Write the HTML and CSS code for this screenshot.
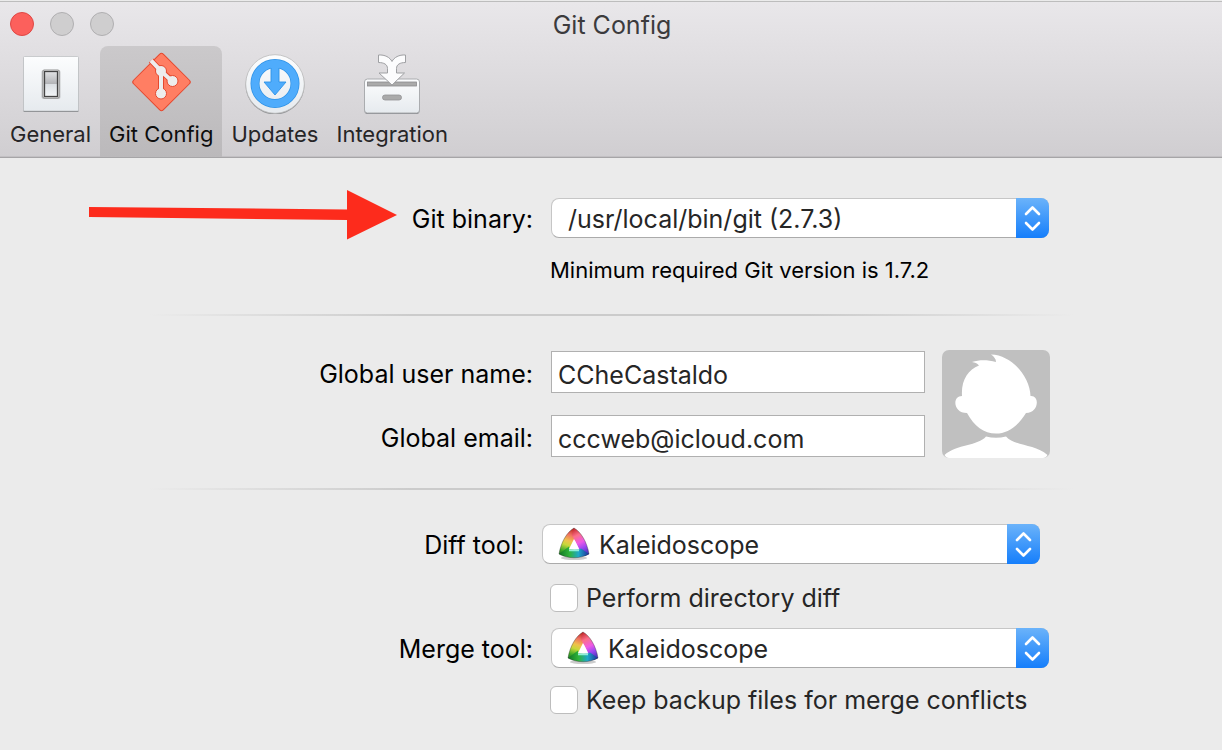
FILE: index.html
```html
<!DOCTYPE html>
<html lang="en">
<head>
<meta charset="utf-8">
<title>Git Config</title>
<link rel="stylesheet" href="styles.css">
</head>
<body>
<svg class="defs" width="0" height="0" aria-hidden="true">
  <defs>
    <linearGradient id="plate" x1="0" y1="0" x2="0" y2="1"><stop offset="0" stop-color="#fcfdfe"/><stop offset="1" stop-color="#e6eaee"/></linearGradient>
    <linearGradient id="lever" x1="0" y1="0" x2="0" y2="1"><stop offset="0" stop-color="#e2e3e5"/><stop offset=".48" stop-color="#b4b5b8"/><stop offset=".52" stop-color="#dce0e4"/><stop offset="1" stop-color="#f3f6f8"/></linearGradient>
    <linearGradient id="k-left" gradientUnits="userSpaceOnUse" x1="16" y1="1" x2="6" y2="30"><stop offset="0" stop-color="#b01a1a"/><stop offset=".25" stop-color="#f07060"/><stop offset=".45" stop-color="#f0c04c"/><stop offset=".6" stop-color="#c8d83a"/><stop offset=".8" stop-color="#42ac28"/><stop offset="1" stop-color="#126a22"/></linearGradient>
    <linearGradient id="k-right" gradientUnits="userSpaceOnUse" x1="14" y1="2" x2="28" y2="30"><stop offset="0" stop-color="#c02226"/><stop offset=".25" stop-color="#fb7088"/><stop offset=".5" stop-color="#ee5ae6"/><stop offset=".7" stop-color="#9a46f2"/><stop offset="1" stop-color="#23309e"/></linearGradient>
    <linearGradient id="k-bottom" x1="0" y1="0" x2="1" y2="0"><stop offset="0" stop-color="#117525"/><stop offset=".35" stop-color="#2fb43a"/><stop offset=".65" stop-color="#1fa8c8"/><stop offset="1" stop-color="#1d2f9c"/></linearGradient>
    <symbol id="kaleidoscope" viewBox="0 0 32 34">
      <ellipse cx="16" cy="31" rx="13" ry="2" fill="#000" opacity=".2"/>
      <path d="M16 1C9 5 3 15 1 27L8 29L11 22L16 12V1Z" fill="url(#k-left)"/>
      <path d="M16 1C23 5 29 15 31 27L27 29L21 22L16 12L14 8Z" fill="url(#k-right)"/>
      <path d="M1 27L11 19.500V22.500H21L23 21.500L31 27C22 32 10 32 1 27Z" fill="url(#k-bottom)"/>
      <path d="M16 1C9 5 3 15 1 27C10 32 22 32 31 27C29 15 23 5 16 1Z" fill="none" stroke="#222" stroke-opacity=".35"/>
      <path d="M11 23.500H21" fill="none" stroke="#8ff0d8" stroke-width="1.500"/>
      <path d="M16.500 13.500L12.500 21.500Q16.500 22.500 20.500 21.500Z" fill="#fff" stroke="#fff" stroke-width=".6"/>
    </symbol>
    <symbol id="stepper" viewBox="0 0 33 40">
      <path d="M10 16L16.500 9.500L23 16M10 25L16.500 31.500L23 25" fill="none" stroke="#fff" stroke-width="2.600" stroke-linecap="round" stroke-linejoin="round"/>
    </symbol>
  </defs>
</svg>

<header class="chrome">
  <div class="titlebar">
    <div class="lights">
      <button class="light light-close" aria-label="Close"></button>
      <button class="light" aria-label="Minimize" disabled></button>
      <button class="light" aria-label="Zoom" disabled></button>
    </div>
    <h1 class="title">Git Config</h1>
  </div>
  <nav class="toolbar">
    <button class="tool">
      <svg class="tool-icon" viewBox="0 0 64 64">
        <rect x="4.500" y="7" width="55" height="55" rx="1" fill="#77797c"/>
        <rect x="4.500" y="6.500" width="55" height="54.500" rx="1" fill="url(#plate)" stroke="#bfc1c4" stroke-width=".8"/>
        <rect x="22.500" y="20" width="19" height="29" rx="2" fill="#777" opacity=".35"/>
        <rect x="24" y="20" width="16" height="28" rx="1" fill="#fff" stroke="#777" stroke-width=".8"/>
        <rect x="25.500" y="21.500" width="13" height="25" fill="url(#lever)" stroke="#444" stroke-width="1.300"/>
      </svg>
      <span>General</span>
    </button>
    <button class="tool tool-active" aria-current="page">
      <svg class="tool-icon" viewBox="0 0 64 64">
        <rect x="11.500" y="11" width="42" height="42" rx="2.500" transform="rotate(45 32.500 32)" fill="#ff7e63" stroke="#e5482e"/>
        <path d="M22 10.500L32 21L44 31.500M32 21V44" fill="none" stroke="#e5482e" stroke-width="6"/>
        <g fill="#ededed" stroke="#e5482e"><circle cx="32" cy="21" r="5.500"/><circle cx="43.500" cy="31" r="5.500"/><circle cx="32" cy="43.500" r="5.500"/></g>
        <path d="M22 10.500L32 21L43.500 31.500M32 21V44" fill="none" stroke="#ededed" stroke-width="4"/>
      </svg>
      <span>Git Config</span>
    </button>
    <button class="tool">
      <svg class="tool-icon" viewBox="0 0 64 64">
        <circle cx="32" cy="35" r="29.500" fill="#929497"/>
        <circle cx="32" cy="34" r="29.300" fill="url(#plate)" stroke="#bbb" stroke-width=".8"/>
        <circle cx="32" cy="33.500" r="20" fill="none" stroke="#2e92e6" stroke-width="9"/>
        <circle cx="32" cy="33.500" r="20" fill="none" stroke="#4facfc" stroke-width="7.500"/>
        <path d="M28 16H36V32H43L32 45L21 32H28Z" fill="#4facfc"/>
        <path d="M28 18V32H21L32 45L43 32H36V18" fill="none" stroke="#2e92e6" stroke-width=".9" stroke-linejoin="round"/>
      </svg>
      <span>Updates</span>
    </button>
    <button class="tool">
      <svg class="tool-icon" viewBox="0 0 64 64">
        <rect x="4.500" y="30" width="55" height="34" rx="3" fill="#85878a"/>
        <rect x="4.500" y="29" width="55" height="34" rx="3" fill="url(#plate)" stroke="#aaacaf"/>
        <rect x="7.500" y="32" width="49" height="4" fill="#aaa" stroke="#8b8b8d" stroke-width=".8"/>
        <rect x="22.500" y="45" width="19" height="5" rx="2.500" fill="#aaa" stroke="#929294" stroke-width=".8"/>
        <path d="M18.500 5C25 4.500 30 7.500 32 11.500C34 7.500 39 4.500 45.500 5V12.500C40 12.500 36.500 14.500 36.500 18.500V23H44.500L32 35L19 23H27.500V18.500C27.500 14.500 24 12.500 18.500 12.500Z" fill="#fcfcfd" stroke="#9fa0a3"/>
      </svg>
      <span>Integration</span>
    </button>
  </nav>
</header>

<main class="pane">
  <svg class="arrow" viewBox="0 0 310 52" aria-hidden="true"><path d="M1 19L259 21.500V2L309 27L259 51.500V32L1 29Z" fill="#fd2b1c"/></svg>

  <section class="group">
    <div class="row">
      <label class="label" for="binary">Git binary:</label>
      <div class="popup">
        <select id="binary"><option>/usr/local/bin/git (2.7.3)</option></select>
        <svg class="stepper" aria-hidden="true"><use href="#stepper"/></svg>
      </div>
    </div>
    <p class="hint">Minimum required Git version is 1.7.2</p>
  </section>

  <hr class="rule">

  <section class="identity">
    <div class="fields">
      <label class="label" for="name">Global user name:</label>
      <input class="text" id="name" type="text" value="CCheCastaldo">
      <label class="label" for="email">Global email:</label>
      <input class="text" id="email" type="email" value="cccweb@icloud.com">
    </div>
    <svg class="avatar" viewBox="0 0 108 108" role="img" aria-label="User picture">
      <rect width="108" height="108" rx="7" fill="#c0c0c0"/>
      <path d="M49 4.500C70 5 88 27 88.500 46C98 45 97 63 84 63C76 76 66 83.500 54 83.500C42 83.500 32 76 25 63C11 63 10 46 20 46C19 30 26 20 37 15.500C35 13 33 12.500 30 12C38 9.500 46 10 54 12C54 9 52 6.500 49 4.500Z" fill="#fff"/>
      <path d="M44 86.500Q54 89 64 86.500C72 96 93 94 105.500 105Q104 108 101 108H7Q4 108 2.500 105C15 94 36 96 44 86.500Z" fill="#fff"/>
    </svg>
  </section>

  <hr class="rule">

  <section class="group tools">
    <div class="row row-outset">
      <label class="label" for="diff">Diff tool:</label>
      <div class="popup popup-icon">
        <select id="diff"><option>Kaleidoscope</option></select>
        <svg class="app-icon" aria-hidden="true"><use href="#kaleidoscope"/></svg>
        <svg class="stepper" aria-hidden="true"><use href="#stepper"/></svg>
      </div>
    </div>
    <label class="check"><input type="checkbox">Perform directory diff</label>
    <div class="row">
      <label class="label" for="merge">Merge tool:</label>
      <div class="popup popup-icon">
        <select id="merge"><option>Kaleidoscope</option></select>
        <svg class="app-icon" aria-hidden="true"><use href="#kaleidoscope"/></svg>
        <svg class="stepper" aria-hidden="true"><use href="#stepper"/></svg>
      </div>
    </div>
    <label class="check check-last"><input type="checkbox">Keep backup files for merge conflicts</label>
  </section>
</main>
</body>
</html>
```

FILE: styles.css
```css
* { box-sizing: border-box; }

body {
  margin: 0;
  background: #ebebeb;
  color: #000;
  font: 25px/32px Inter, Roboto, "Liberation Sans", sans-serif;
}

button, input, select { font: inherit; color: inherit; }

.defs { position: absolute; }

.chrome {
  margin-top: 1px;
  border-top: 1px solid #bdbdbd;
  border-bottom: 1px solid #a6a5a7;
  background: linear-gradient(#e9e7ea, #d0ced1);
  box-shadow: inset 0 -1px #c2c0c3;
}

.titlebar {
  display: grid;
  grid-template-columns: 1fr auto 1fr;
  align-items: center;
  height: 44px;
  padding: 0 8px 0 10px;
}

.lights { display: flex; gap: 16px; }

.light {
  width: 24px;
  height: 24px;
  padding: 0;
  border: 1px solid #b0afb1;
  border-radius: 50%;
  background: #cfcecf;
}

.light-close { border-color: #df4744; background: #fc605c; }

.title {
  margin: 0;
  padding-top: 2px;
  color: #3c3b3d;
  font-size: 25px;
  font-weight: 400;
  line-height: 42px;
}

.toolbar { display: flex; padding-left: 1px; }

.tool {
  display: flex;
  flex-direction: column;
  align-items: center;
  gap: 5px;
  padding: 4px 9px 8px;
  border: 0;
  border-radius: 8px 8px 0 0;
  background: none;
  color: #262527;
  font-size: 22px;
  line-height: 30px;
}

.tool-active { background: linear-gradient(#cbc9cb, #bbb9bb); color: #0d0d0d; }

.tool-icon { width: 64px; height: 64px; }

.pane { position: relative; padding-top: 40px; }

.arrow {
  position: absolute;
  top: 30px;
  left: 88px;
  width: 310px;
  height: 52px;
}

.row {
  display: grid;
  grid-template-columns: 533px minmax(0, 1fr);
  column-gap: 18px;
  align-items: center;
  padding-right: 173px;
}

.row-outset { grid-template-columns: 524px minmax(0, 1fr); padding-right: 182px; }

.label { padding-top: 2px; text-align: right; white-space: nowrap; }

.popup { position: relative; display: flex; }

.popup select {
  width: 100%;
  height: 40px;
  padding: 2px 50px 0 16px;
  appearance: none;
  border: 1px solid #c6c6c6;
  border-bottom-color: #ababab;
  border-radius: 8px;
  background: #fff;
  color: #262626;
}

.popup-icon select { padding-left: 56px; }

.app-icon {
  position: absolute;
  top: 3px;
  left: 16px;
  width: 32px;
  height: 34px;
  pointer-events: none;
}

.stepper {
  position: absolute;
  top: 0;
  right: 0;
  width: 33px;
  height: 40px;
  border-radius: 0 8px 8px 0;
  background: linear-gradient(#6bb3fa, #157efb);
  pointer-events: none;
}

.hint {
  margin: 17px 0 0;
  padding-left: 550px;
  font-size: 22px;
  line-height: 30px;
}

.rule {
  height: 2px;
  margin: 29px 60px 0;
  border: 0;
  background: linear-gradient(90deg, transparent 8%, #cbcbcb 32%, #cbcbcb 68%, transparent 92%);
}

.identity {
  display: flex;
  gap: 17px;
  padding: 34px 172px 0 0;
}

.fields {
  display: grid;
  flex: 1;
  grid-template-columns: 533px minmax(0, 1fr);
  gap: 22px 18px;
  align-content: start;
  align-items: center;
  padding-top: 1px;
}

.text {
  width: 100%;
  height: 42px;
  padding: 5px 6px 0;
  border: 1px solid #b0b0b0;
  border-radius: 0;
  background: #fff;
  color: #262626;
}

.fields .label { padding-top: 4px; }

.avatar { width: 108px; height: 108px; }

.identity + .rule { margin-top: 30px; }

.tools { padding-top: 34px; }

.check {
  display: flex;
  gap: 8px;
  align-items: center;
  margin: 18px 0 14px;
  padding-left: 550px;
  color: #262626;
  line-height: 32px;
  white-space: nowrap;
}

.check-last { margin: 16px 0; }

.check input {
  width: 28px;
  height: 28px;
  margin: 0;
  appearance: none;
  border: 1px solid #bdbdbd;
  border-radius: 6px;
  background: #fff;
}

.check input:checked { background: #157efb; }
```
